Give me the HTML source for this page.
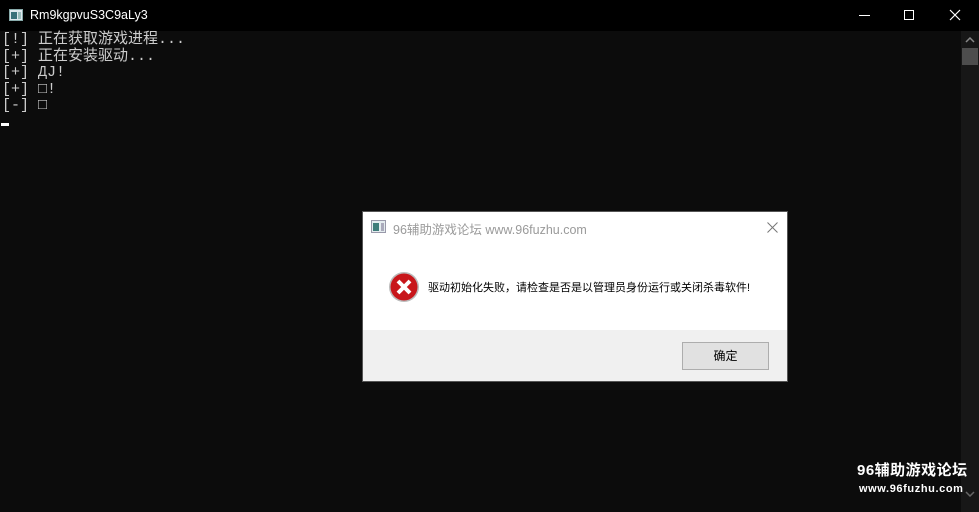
<!DOCTYPE html>
<html><head><meta charset="utf-8"><style>
body{margin:0;width:979px;height:512px;background:#0c0c0c;overflow:hidden;position:relative;font-family:"Liberation Sans","Noto Sans CJK SC",sans-serif}
.tb{position:absolute;left:0;top:0;width:979px;height:31px;background:#000;color:#fff;font-size:12px}
.con{position:absolute;left:2px;top:32px;color:#cccccc;font-family:"Liberation Mono","Noto Sans CJK SC",monospace;font-size:15px;line-height:16.5px;white-space:pre}
.sb{position:absolute;left:961px;top:31px;width:18px;height:481px;background:#171717}
.dlg{position:absolute;left:362px;top:211px;width:424px;height:169px;border:1px solid #555;background:#fff}
</style></head><body>
<div class="tb">
<svg style="position:absolute;left:9px;top:9px" width="14" height="12"><rect x="0.5" y="0.5" width="13" height="11" fill="#dfe7ee" stroke="#8aa"/><rect x="2" y="3" width="6" height="7" fill="#3a6f7a"/><rect x="9" y="3" width="3" height="7" fill="#9bb"/></svg>
<span style="position:absolute;left:30px;top:8px;font-size:12.5px">Rm9kgpvuS3C9aLy3</span>
<div style="position:absolute;left:859px;top:15px;width:11px;height:1px;background:#fff"></div>
<div style="position:absolute;left:904px;top:10px;width:8px;height:8px;border:1px solid #fff"></div>
<svg style="position:absolute;left:949px;top:9px" width="12" height="12"><path d="M1 1L11 11M11 1L1 11" stroke="#fff" stroke-width="1.2"/></svg>
</div>
<div class="con">[!] 正在获取游戏进程...
[+] 正在安装驱动...
[+] ДJ!
[+] □!
[-] □</div>
<div style="position:absolute;left:1px;top:123px;width:8px;height:3px;background:#fff"></div>
<div class="sb"><svg style="position:absolute;left:4px;top:6px" width="10" height="6"><path d="M1 5L5 1L9 5" stroke="#888" stroke-width="1.5" fill="none"/></svg><div style="position:absolute;left:1px;top:17px;width:16px;height:17px;background:#4d4d4d"></div><svg style="position:absolute;left:4px;top:460px" width="10" height="6"><path d="M1 1L5 5L9 1" stroke="#666" stroke-width="1.5" fill="none"/></svg></div>
<div class="dlg">
<svg style="position:absolute;left:8px;top:8px" width="15" height="13"><rect x="0.5" y="0.5" width="14" height="12" fill="#e4ecef" stroke="#99a"/><rect x="2" y="3" width="6" height="8" fill="#3f7d7a"/><rect x="10" y="3" width="3" height="8" fill="#aab"/></svg>
<span style="position:absolute;left:30px;top:7px;font-size:12.5px;color:#9a9a9a">96辅助游戏论坛 www.96fuzhu.com</span>
<svg style="position:absolute;left:404px;top:10px" width="11" height="11"><path d="M0.5 0.5L10.5 10.5M10.5 0.5L0.5 10.5" stroke="#777" stroke-width="1"/></svg>
<svg style="position:absolute;left:25px;top:59px" width="32" height="32"><circle cx="16" cy="16" r="15" fill="#bbb"/><circle cx="16" cy="16" r="13.5" fill="#c8161b"/><path d="M10 10L22 22M22 10L10 22" stroke="#fff" stroke-width="4"/></svg>
<span style="position:absolute;left:65px;top:67px;font-size:11px;color:#000">驱动初始化失败，请检查是否是以管理员身份运行或关闭杀毒软件!</span>
<div style="position:absolute;left:0;top:118px;width:424px;height:51px;background:#f0f0f0"></div>
<div style="position:absolute;left:319px;top:130px;width:85px;height:26px;border:1px solid #adadad;background:#e1e1e1;font-size:12px;text-align:center;line-height:26px">确定</div>
</div>
<div style="position:absolute;left:857px;top:459px;color:#fff;font-weight:bold;font-size:15px;letter-spacing:0.5px">96辅助游戏论坛</div>
<div style="position:absolute;left:859px;top:483px;color:#fff;font-weight:bold;font-size:11px;letter-spacing:0.6px">www.96fuzhu.com</div>
</body></html>
